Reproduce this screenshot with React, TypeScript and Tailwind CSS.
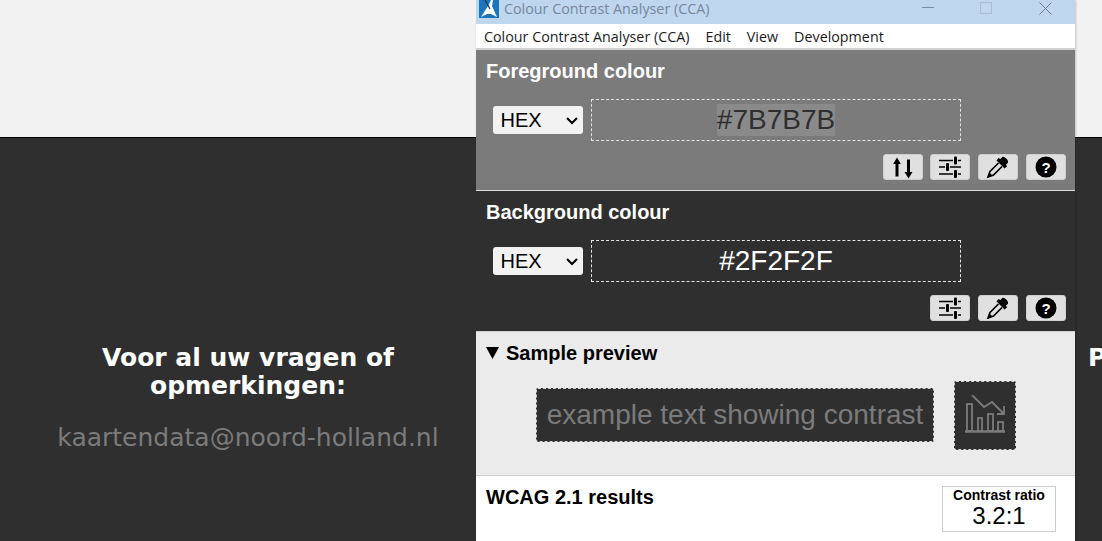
import React from "react";

function SwapIcon() {
  return (
    <svg width="22" height="23" viewBox="0 0 22 23">
      <path d="M5 1.5 L8.8 8 H6.5 V20.5 H3.5 V8 H1.2 Z" fill="#000" />
      <path d="M15 3.5 H18 V16 H20.5 L16.5 22.5 L12.5 16 H15 Z" fill="#000" />
    </svg>
  );
}

function SlidersIcon() {
  return (
    <svg width="24" height="24" viewBox="0 0 24 24">
      <g stroke="#000" strokeWidth="1.5">
        <path d="M1 5.5 H15 M20 5.5 H23" />
        <path d="M1 12 H7 M12 12 H23" />
        <path d="M1 19 H15 M20 19 H23" />
      </g>
      <g fill="#000">
        <rect x="16" y="1.5" width="3" height="8" rx="1" />
        <rect x="8" y="8" width="3" height="8" rx="1" />
        <rect x="16" y="15" width="3" height="8" rx="1" />
      </g>
    </svg>
  );
}

function DropperIcon() {
  return (
    <svg width="24" height="24" viewBox="0 0 24 24">
      <path d="M14.5 4 L16 2.2 C18 0.4 23.6 5.8 21.8 8 L20 9.5 L21 11.5 L18.5 13.5 L10.5 5.5 L12.5 3 Z" fill="#000" />
      <path d="M12.5 8 L4 16.5 L2 22 L7.5 20 L16 11.5" fill="#e0e0e0" stroke="#000" strokeWidth="1.6" />
      <path d="M1.5 23 L3.5 17.5 L6.5 20.5 Z" fill="#000" />
    </svg>
  );
}

function HelpIcon() {
  return (
    <svg width="22" height="22" viewBox="0 0 22 22">
      <circle cx="11" cy="11" r="10.5" fill="#000" />
      <text x="11" y="16.5" textAnchor="middle" fill="#fff" fontSize="15" fontWeight="700" fontFamily="Liberation Sans, sans-serif">?</text>
    </svg>
  );
}

function ToolButton({ children, className = "" }: { children: React.ReactNode; className?: string }) {
  return (
    <div className={`w-10 h-[26px] flex items-center justify-center rounded-[3px] bg-[#e0e0e0] border border-[#cfcfcf] ${className}`}>
      {children}
    </div>
  );
}

function ColourPanel({
  title,
  value,
  dark,
  swap,
}: {
  title: string;
  value: string;
  dark?: boolean;
  swap?: boolean;
}) {
  return (
    <section className={`h-[140px] relative ${dark ? "bg-[#2f2f2f]" : "bg-[#7b7b7b]"}`}>
      <h2 className="pl-2.5 pt-[9px] text-[20px] leading-[24px] font-bold text-white">{title}</h2>
      <div className="flex items-center mt-4 ml-[17px]">
        <div className="w-[90px] h-[28px] rounded-[3px] bg-[#f2f2f2] flex items-center justify-between pl-[7.5px] pr-[3px] text-[20px] text-black">
          HEX
          <svg width="16" height="16" viewBox="0 0 16 16">
            <path d="M3 6 L8 11 L13 6" fill="none" stroke="#000" strokeWidth="2" />
          </svg>
        </div>
        <div className="w-[370px] h-[42px] ml-2 border border-dashed border-[#e4e4e4] flex items-center justify-center">
          <span className={`text-[28px] leading-[32px] ${dark ? "text-white" : "text-[#2f2f2f] bg-[#8a8a8a]"}`}>{value}</span>
        </div>
      </div>
      <div className="flex justify-end gap-2 mt-[13px] pr-[9px]">
        {swap && <ToolButton className="-mr-px"><SwapIcon /></ToolButton>}
        <ToolButton><SlidersIcon /></ToolButton>
        <ToolButton><DropperIcon /></ToolButton>
        <ToolButton><HelpIcon /></ToolButton>
      </div>
    </section>
  );
}

function ContrastWindow() {
  return (
    <div className="absolute left-[476px] top-0 w-[599px] h-[541px] overflow-hidden bg-white font-['Liberation_Sans',sans-serif] shadow-[1px_0_2px_rgba(0,0,0,0.2)]">
      <div className="h-6 bg-[#bfd6ef] flex items-start relative font-['Open_Sans',sans-serif] text-[14.3px] leading-[18px] text-[#76889c]">
        <svg width="20" height="18" viewBox="0 0 20 18" className="ml-[3px]">
          <rect width="20" height="18" fill="#1c75bc" />
          <path d="M2 17 L9 6 L12 0 L14 0 L13 6 L18 17 L12 14 L8 14 Z" fill="#fff" />
          <path d="M6 0 L11 9" stroke="#16344f" strokeWidth="1.2" />
        </svg>
        <span className="ml-[5px]">Colour Contrast Analyser (CCA)</span>
        <div className="absolute left-[446px] top-[7px] w-3 h-px bg-[#7b8998]" />
        <div className="absolute left-[504px] top-[2px] w-3 h-3 border border-[#abbdd2]" />
        <svg width="13" height="13" viewBox="0 0 13 13" className="absolute left-[563px] top-[2px]">
          <path d="M0.5 0.5 L12.5 12.5 M12.5 0.5 L0.5 12.5" stroke="#6e7c8b" strokeWidth="1" />
        </svg>
      </div>
      <nav className="h-[26px] bg-white border-b-2 border-[#d0d0d0] flex items-center pl-2 pt-0.5 gap-4 font-['Open_Sans',sans-serif] text-[14.3px] text-[#1c1c1c]">
        <span>Colour Contrast Analyser (CCA)</span>
        <span>Edit</span>
        <span>View</span>
        <span>Development</span>
      </nav>
      <ColourPanel title="Foreground colour" value="#7B7B7B" swap />
      <div className="h-px bg-[#dcdcdc]" />
      <ColourPanel title="Background colour" value="#2F2F2F" dark />
      <section className="h-[145px] bg-[#ebebeb] border-t border-b border-[#cfcfcf]">
        <div className="flex items-center pl-2.5 pt-[9px]">
          <svg width="14" height="12" viewBox="0 0 14 12">
            <path d="M0 0 H13 L6.5 12 Z" fill="#000" />
          </svg>
          <h2 className="ml-[6px] text-[20px] leading-[24px] font-bold text-black">Sample preview</h2>
        </div>
        <div className="flex ml-[60px] mt-4">
          <div className="w-[398px] h-[54px] mt-[7px] rounded-[2px] bg-[#2f2f2f] border border-dashed border-[#cfcfcf] flex items-center justify-center text-[28px] text-[#7b7b7b]">
            example text showing contrast
          </div>
          <div className="w-[62px] h-[69px] ml-5 rounded-[2px] bg-[#2f2f2f] border border-dashed border-[#cfcfcf] flex items-center justify-center">
            <svg width="42" height="42" viewBox="0 0 42 42" fill="none" stroke="#7b7b7b" strokeWidth="1.8">
              <path d="M1 36.5 H41" strokeWidth="2.5" />
              <rect x="3" y="9" width="5" height="27" />
              <rect x="14" y="23" width="4" height="13" />
              <rect x="24" y="19" width="5" height="17" />
              <rect x="34" y="27" width="5" height="9" />
              <path d="M8 0 L20 12 L28 7 L39 18" />
              <path d="M40 11 V19 H33" />
            </svg>
          </div>
        </div>
      </section>
      <section className="flex justify-between pl-2.5 pr-[19px] pt-[9px] bg-white">
        <h2 className="text-[20px] leading-[24px] font-bold text-black">WCAG 2.1 results</h2>
        <div className="w-[114px] h-[46px] mt-px border border-[#cccccc] text-center text-black">
          <div className="text-[14px] leading-[16px] font-bold">Contrast ratio</div>
          <div className="text-[24px] leading-[26px]">3.2:1</div>
        </div>
      </section>
    </div>
  );
}

export default function App() {
  return (
    <div className="relative w-[1102px] h-[541px] overflow-hidden bg-[#2f2f2f]">
      <div className="h-[138px] bg-[#f2f2f2] border-b border-black" />
      <div className="flex font-['DejaVu_Sans',sans-serif]">
        <div className="w-[496px] shrink-0 pt-[206px] text-center">
          <h2 className="text-[25px] leading-[28px] font-bold text-white">
            Voor al uw vragen of
            <br />
            opmerkingen:
          </h2>
          <p className="mt-[23px] text-[25px] leading-[30px] text-[#7b7b7b]">kaartendata@noord-holland.nl</p>
        </div>
        <div className="shrink-0 pl-[592px] pt-[206px] text-[25px] leading-[28px] font-bold text-white">P</div>
      </div>
      <ContrastWindow />
    </div>
  );
}
